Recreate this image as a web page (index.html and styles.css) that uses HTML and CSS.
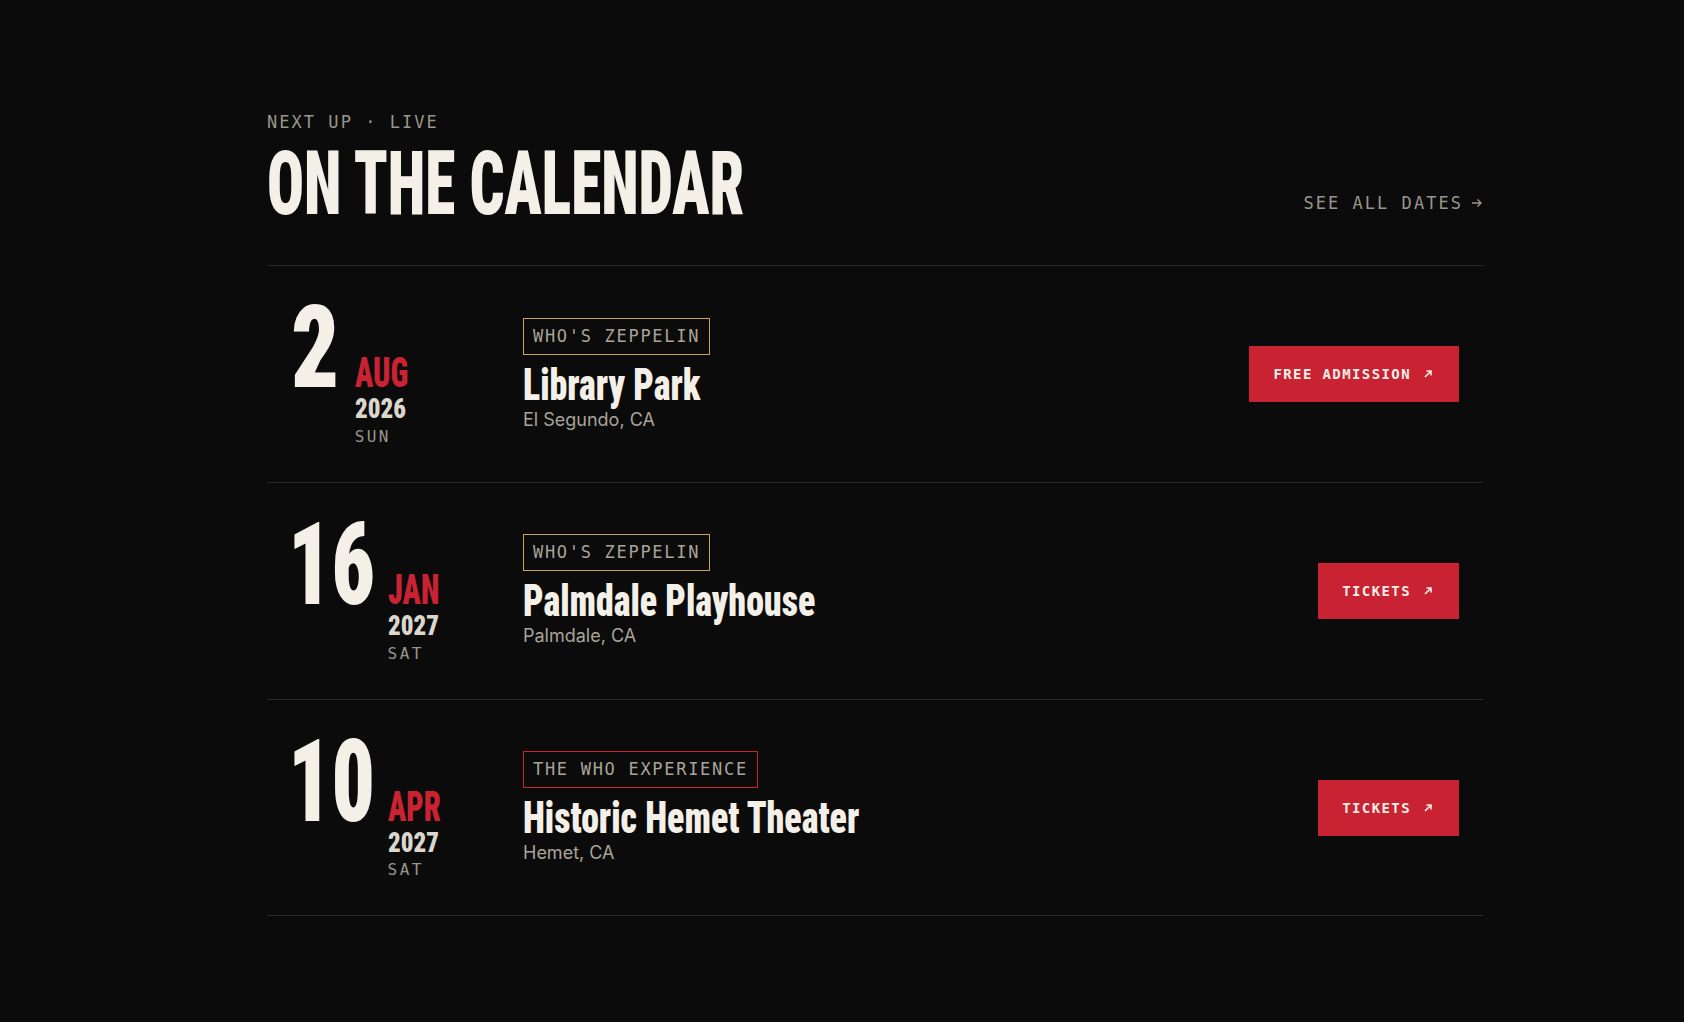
FILE: index.html
```html
<!DOCTYPE html>
<html lang="en">
  <head>
    <meta charset="UTF-8" />
    <meta name="viewport" content="width=device-width, initial-scale=1.0" />
    <title>On the Calendar</title>
    <link rel="stylesheet" href="styles.css">
  </head>
  <body>
    <section class="calendar">
      <header class="cal-head">
        <div>
          <p class="eyebrow">Next up · Live</p>
          <h2 class="cal-title"><span class="squeeze">On the calendar</span></h2>
        </div>
        <a class="see-all" href="#">See all dates
          <svg width="12" height="12" viewBox="0 0 12 12"><path d="M1 6h9M6.5 2.5 10 6l-3.5 3.5" fill="none" stroke="currentColor" stroke-width="1.4"/></svg>
        </a>
      </header>

      <!-- Lista de fechas -->
      <ul class="shows">
        <li class="show">
          <div class="show-date">
            <span class="day">2</span>
            <div class="date-meta">
              <span class="month"><span class="squeeze">Aug</span></span>
              <span class="year"><span class="squeeze">2026</span></span>
              <span class="dow">Sun</span>
            </div>
          </div>
          <div class="show-info">
            <span class="tag tag-gold">Who's Zeppelin</span>
            <h3 class="venue"><span class="squeeze">Library Park</span></h3>
            <p class="city">El Segundo, CA</p>
          </div>
          <a class="btn" href="#">Free admission
            <svg width="10" height="10" viewBox="0 0 10 10"><path d="M2 8 8 2M3.5 2H8v4.5" fill="none" stroke="currentColor" stroke-width="1.6"/></svg>
          </a>
        </li>
        <li class="show">
          <div class="show-date">
            <span class="day day-wide">16</span>
            <div class="date-meta">
              <span class="month"><span class="squeeze">Jan</span></span>
              <span class="year"><span class="squeeze">2027</span></span>
              <span class="dow">Sat</span>
            </div>
          </div>
          <div class="show-info">
            <span class="tag tag-gold">Who's Zeppelin</span>
            <h3 class="venue"><span class="squeeze">Palmdale Playhouse</span></h3>
            <p class="city">Palmdale, CA</p>
          </div>
          <a class="btn" href="#">Tickets
            <svg width="10" height="10" viewBox="0 0 10 10"><path d="M2 8 8 2M3.5 2H8v4.5" fill="none" stroke="currentColor" stroke-width="1.6"/></svg>
          </a>
        </li>
        <li class="show">
          <div class="show-date">
            <span class="day day-wide">10</span>
            <div class="date-meta">
              <span class="month"><span class="squeeze">Apr</span></span>
              <span class="year"><span class="squeeze">2027</span></span>
              <span class="dow">Sat</span>
            </div>
          </div>
          <div class="show-info">
            <span class="tag tag-red">The Who Experience</span>
            <h3 class="venue"><span class="squeeze">Historic Hemet Theater</span></h3>
            <p class="city">Hemet, CA</p>
          </div>
          <a class="btn" href="#">Tickets
            <svg width="10" height="10" viewBox="0 0 10 10"><path d="M2 8 8 2M3.5 2H8v4.5" fill="none" stroke="currentColor" stroke-width="1.6"/></svg>
          </a>
        </li>
      </ul>
    </section>
  </body>
</html>
```

FILE: styles.css
```css
body {
  margin: 0;
  background-color: #0b0b0b;
  color: #f4f0e8;
  font-family: "Inter", "Liberation Sans", sans-serif;
}

.calendar {
  width: 1216px;
  margin-left: 267px;
  padding-top: 112px;
}

.cal-head {
  display: flex;
  justify-content: space-between;
  align-items: flex-end;
  padding-bottom: 37px;
  border-bottom: 1px solid #2b2b2b;
}

.eyebrow,
.see-all,
.tag,
.dow,
.btn {
  font-family: "DejaVu Sans Mono", "Liberation Mono", monospace;
  text-transform: uppercase;
}

.eyebrow {
  margin: 0 0 7px;
  font-size: 17px;
  line-height: 1.2;
  letter-spacing: 0.12em;
  color: #9a948b;
}

/* fuente condensada para titulos y fechas */
.cal-title,
.day,
.month,
.year,
.venue {
  font-family: Roboto, "Liberation Sans", sans-serif;
  font-stretch: 75%;
  font-weight: 900;
}

.squeeze {
  display: inline-block;
  transform-origin: left center;
  white-space: nowrap;
}

.cal-title .squeeze {
  transform: scaleX(0.69);
}

.month .squeeze {
  transform: scaleX(0.72);
}

.year .squeeze {
  transform: scaleX(0.89);
}

.venue .squeeze {
  transform: scaleX(0.815);
}

.cal-title {
  margin: 0;
  font-size: 89px;
  line-height: 1;
  text-transform: uppercase;
}

.see-all {
  display: flex;
  align-items: center;
  gap: 8px;
  margin-bottom: 15px;
  font-size: 17px;
  line-height: 20px;
  letter-spacing: 0.12em;
  color: #9a948b;
  text-decoration: none;
}

.shows {
  list-style: none;
  margin: 0;
  padding: 0;
}

.show {
  display: grid;
  grid-template-columns: 200px 1fr auto;
  column-gap: 32px;
  align-items: center;
  padding: 33px 24px;
  border-bottom: 1px solid #2b2b2b;
}

.show-date {
  display: flex;
  align-items: baseline;
  gap: 17px;
}

.day {
  display: inline-block;
  font-size: 115px;
  line-height: 0.85;
  transform: scaleX(0.82);
  transform-origin: left center;
  margin-right: -12px;
}

/* dos digitos: mas angosto */
.day-wide {
  transform: scaleX(0.74);
  margin-left: -3px;
  margin-right: -35px;
}

.date-meta {
  display: flex;
  flex-direction: column;
}

.month {
  font-size: 42px;
  line-height: 1;
  color: #c92232;
  text-transform: uppercase;
}

.year {
  font-size: 28px;
  line-height: 1.06;
  color: #dcd7ce;
}

.dow {
  margin-top: 1px;
  font-size: 16px;
  line-height: 1.5;
  letter-spacing: 0.15em;
  color: #9a948b;
}

.show-info {
  display: flex;
  flex-direction: column;
  align-items: flex-start;
}

.tag {
  padding: 8px 9px;
  font-size: 17px;
  line-height: 19px;
  letter-spacing: 0.1em;
  color: #a9a39a;
  border: 1px solid;
}

.tag-gold {
  border-color: #c9a553;
}

.tag-red {
  border-color: #c92232;
}

.venue {
  margin: 8px 0 0;
  font-size: 44px;
  line-height: 1;
}

.city {
  margin: 1px 0 0;
  font-size: 18px;
  line-height: 1.3;
  color: #a9a39a;
}

.btn {
  display: flex;
  align-items: center;
  gap: 12px;
  padding: 20px 26px 20px 24px;
  background-color: #c92232;
  color: #f4f0e8;
  font-size: 14px;
  font-weight: 700;
  letter-spacing: 0.1em;
  text-decoration: none;
}
```
